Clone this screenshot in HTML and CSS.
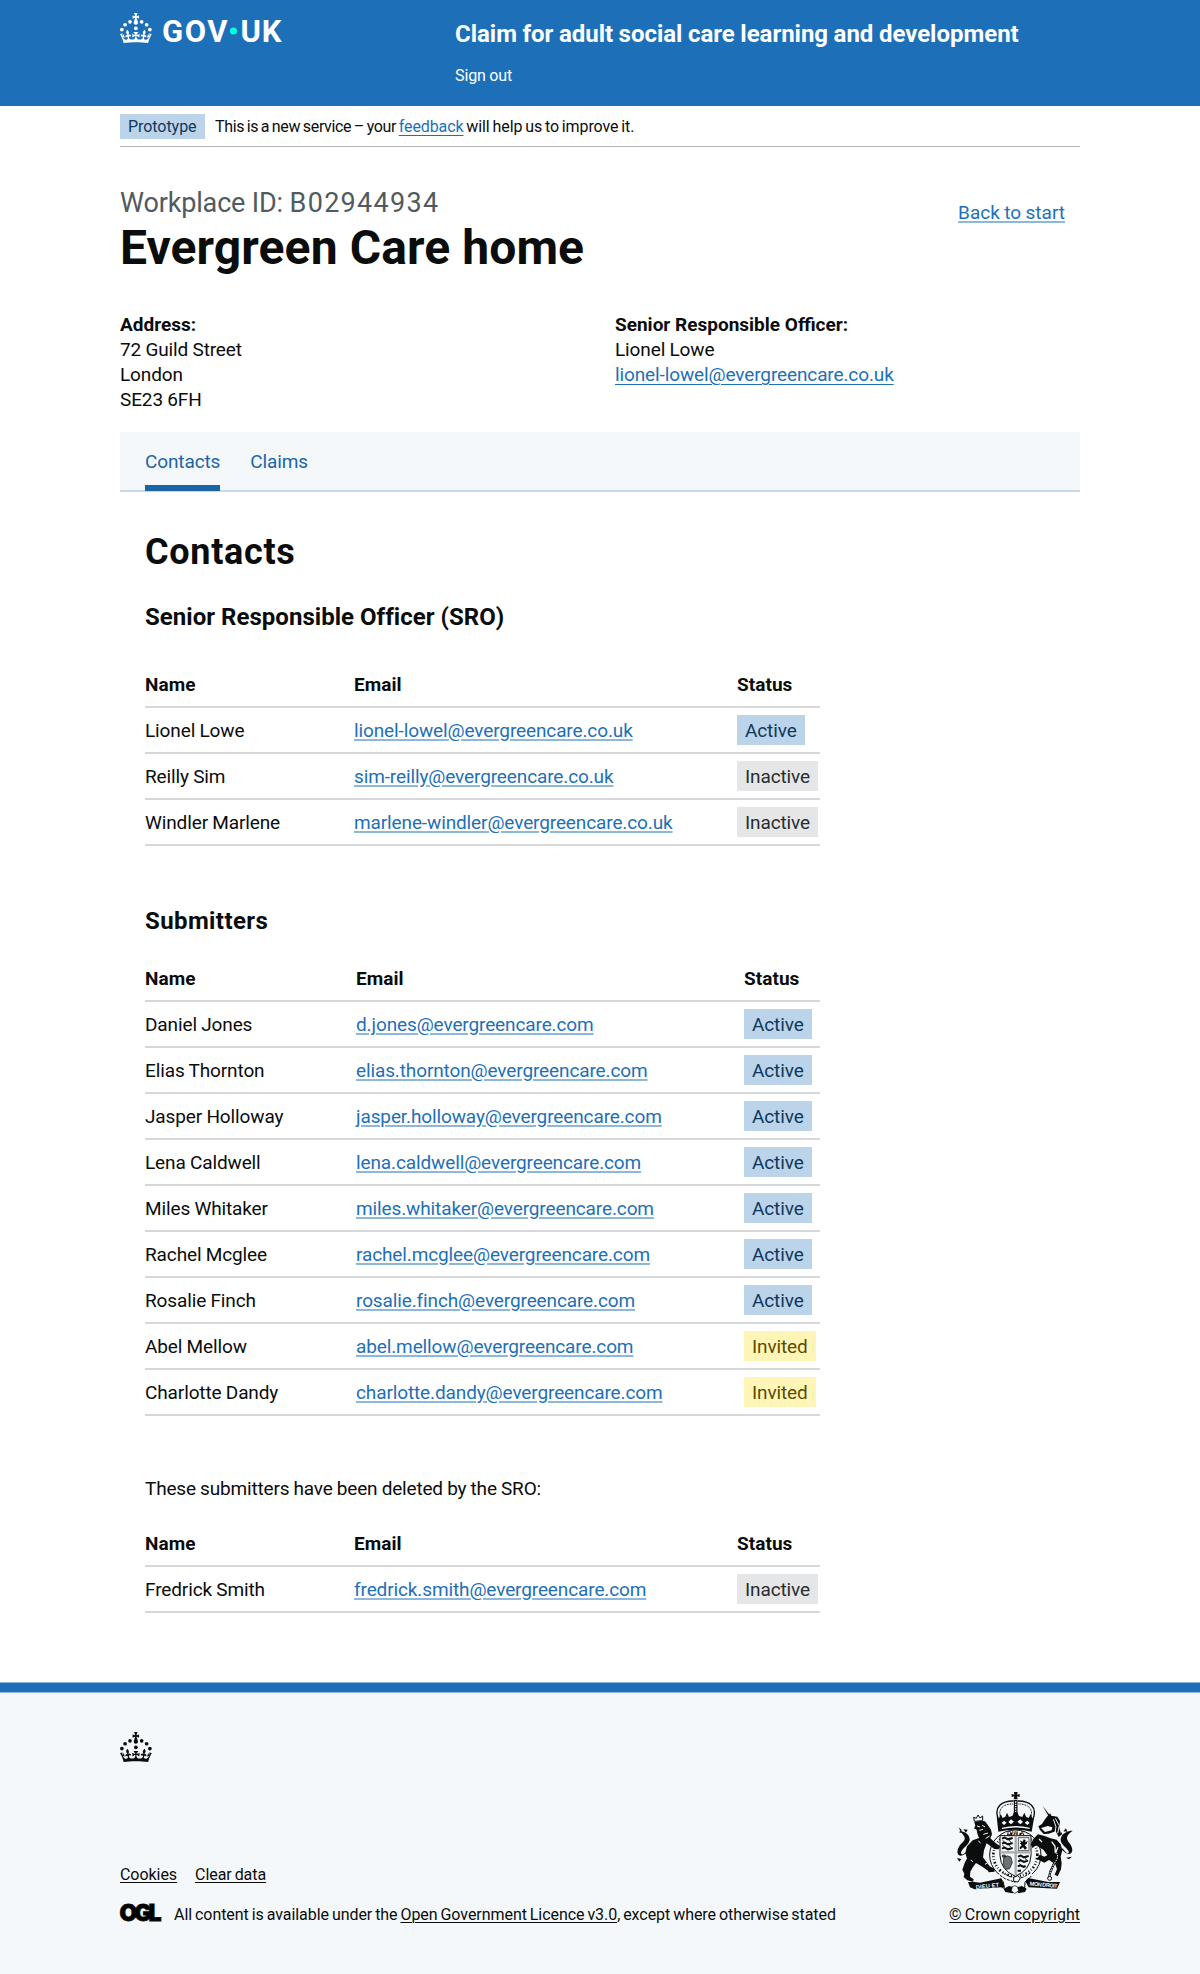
FILE: index.html
```html
<!DOCTYPE html>
<html lang="en">
<head>
<meta charset="utf-8">
<title>Evergreen Care home - Claim for adult social care learning and development</title>
<link rel="stylesheet" href="styles.css">
</head>
<body>
<svg class="defs" width="0" height="0" aria-hidden="true">
  <defs>
    <g id="crown">
      <circle cx="20" cy="17.6" r="3.7"/><circle cx="10.2" cy="23.5" r="3.7"/><circle cx="3.7" cy="33.2" r="3.7"/>
      <circle cx="31.7" cy="30.6" r="3.7"/><circle cx="43.3" cy="17.6" r="3.7"/><circle cx="53.2" cy="23.5" r="3.7"/><circle cx="59.7" cy="33.2" r="3.7"/>
      <path d="M33.1,9.8c.2-.1.3-.3.5-.5l4.6,2.4v-6.8l-4.6,1.5c-.1-.2-.3-.3-.5-.5l1.9-5.9h-6.7l1.9,5.9c-.2.1-.3.3-.5.5l-4.6-1.5v6.8l4.6-2.4c.1.2.3.3.5.5l-2.6,8c-.9,2.8,1.2,5.7,4.1,5.7h0c3,0,5.1-2.9,4.1-5.7l-2.6-8ZM37,37.9s-3.4,3.8-4.1,6.1c2.2,0,4.2-.5,6.4-2.8l-.7,8.5c-2-2.8-4.4-4.1-5.7-3.8.1,3.1.5,6.7,5.8,7.2,3.7.3,6.7-1.5,7-3.8.4-2.6-2-4.3-3.7-1.6-1.4-4.5,2.4-6.1,4.9-3.2-1.9-4.5-1.8-7.7,2.4-10.9,3,4,2.6,7.3-1.2,11.1,2.4-1.3,6.2,0,4,4.6-1.2-2.8-3.7-2.2-4.2.2-.3,1.7.7,3.7,3,4.2,1.9.3,4.7-.9,7-5.9-1.3,0-2.4.7-3.9,1.7l2.4-8c.6,2.3,1.4,3.7,2.2,4.5.6-1.6.5-2.8,0-5.3l5,1.8c-2.6,3.6-5.2,8.7-7.3,17.5-7.4-1.1-15.7-1.7-24.5-1.7h0c-8.8,0-17.1.6-24.5,1.7-2.1-8.9-4.7-13.9-7.3-17.5l5-1.8c-.5,2.5-.6,3.7,0,5.3.8-.8,1.6-2.3,2.2-4.5l2.4,8c-1.5-1-2.6-1.7-3.9-1.7,2.3,5,5.2,6.2,7,5.9,2.3-.4,3.3-2.4,3-4.2-.5-2.4-3-3.1-4.2-.2-2.2-4.6,1.6-6,4-4.6-3.7-3.7-4.2-7.1-1.2-11.1,4.2,3.2,4.3,6.4,2.4,10.9,2.5-2.8,6.3-1.3,4.9,3.2-1.8-2.7-4.1-1-3.7,1.6.3,2.3,3.3,4.1,7,3.8,5.4-.5,5.7-4.2,5.8-7.2-1.3-.2-3.7,1-5.7,3.8l-.7-8.5c2.2,2.3,4.2,2.7,6.4,2.8-.7-2.3-4.1-6.1-4.1-6.1h10.6,0Z"/>
    </g>
  </defs>
</svg>

<header class="header">
  <div class="container header__inner">
    <svg class="header__logo" width="164" height="32" viewBox="0 0 328 64" fill="currentColor" role="img" aria-label="GOV.UK">
      <use href="#crown"/>
      <text class="wordmark" x="84" y="58" textLength="131">GOV</text>
      <circle class="wordmark__dot" cx="227" cy="36" r="7.2"/>
      <text class="wordmark" x="241" y="58" textLength="82">UK</text>
    </svg>
    <div class="header__content">
      <div class="header__title">Claim for adult social care learning and development</div>
      <a class="header__link" href="#">Sign out</a>
    </div>
  </div>
</header>

<div class="container">
  <div class="banner">
    <strong class="tag tag--small">Prototype</strong>
    <span class="banner__text"><span class="banner__intro">This is a new service – your </span><a class="link" href="#">feedback</a> will help us to improve it.</span>
  </div>

  <main class="main">
    <div class="heading">
      <div>
        <div class="caption">Workplace ID: <span class="caption__id">B02944934</span></div>
        <h1 class="title">Evergreen Care home</h1>
      </div>
      <a class="link link--soft heading__back" href="#">Back to start</a>
    </div>

    <div class="details">
      <div><strong>Address:</strong><br>72 Guild Street<br>London<br>SE23 6FH</div>
      <div><strong>Senior Responsible Officer:</strong><br>Lionel Lowe<br><a class="link" href="#">lionel-lowel@evergreencare.co.uk</a></div>
    </div>

    <nav class="subnav">
      <a class="subnav__link subnav__link--current" href="#">Contacts</a>
      <a class="subnav__link" href="#">Claims</a>
    </nav>

    <section class="contacts">
      <h2 class="contacts__title">Contacts</h2>

      <h3 class="contacts__heading">Senior Responsible Officer (SRO)</h3>
      <table class="table table--sro">
        <thead><tr><th class="col-name">Name</th><th class="col-email">Email</th><th>Status</th></tr></thead>
        <tbody>
          <tr><td>Lionel Lowe</td><td><a class="link link--soft" href="#">lionel-lowel@evergreencare.co.uk</a></td><td><span class="tag">Active</span></td></tr>
          <tr><td>Reilly Sim</td><td><a class="link link--soft" href="#">sim-reilly@evergreencare.co.uk</a></td><td><span class="tag tag--grey">Inactive</span></td></tr>
          <tr><td>Windler Marlene</td><td><a class="link link--soft" href="#">marlene-windler@evergreencare.co.uk</a></td><td><span class="tag tag--grey">Inactive</span></td></tr>
        </tbody>
      </table>

      <h3 class="contacts__heading contacts__heading--submitters">Submitters</h3>
      <table class="table table--submitters">
        <thead><tr><th class="col-name">Name</th><th class="col-email">Email</th><th>Status</th></tr></thead>
        <tbody>
          <tr><td>Daniel Jones</td><td><a class="link link--soft" href="#">d.jones@evergreencare.com</a></td><td><span class="tag">Active</span></td></tr>
          <tr><td>Elias Thornton</td><td><a class="link link--soft" href="#">elias.thornton@evergreencare.com</a></td><td><span class="tag">Active</span></td></tr>
          <tr><td>Jasper Holloway</td><td><a class="link link--soft" href="#">jasper.holloway@evergreencare.com</a></td><td><span class="tag">Active</span></td></tr>
          <tr><td>Lena Caldwell</td><td><a class="link link--soft" href="#">lena.caldwell@evergreencare.com</a></td><td><span class="tag">Active</span></td></tr>
          <tr><td>Miles Whitaker</td><td><a class="link link--soft" href="#">miles.whitaker@evergreencare.com</a></td><td><span class="tag">Active</span></td></tr>
          <tr><td>Rachel Mcglee</td><td><a class="link link--soft" href="#">rachel.mcglee@evergreencare.com</a></td><td><span class="tag">Active</span></td></tr>
          <tr><td>Rosalie Finch</td><td><a class="link link--soft" href="#">rosalie.finch@evergreencare.com</a></td><td><span class="tag">Active</span></td></tr>
          <tr><td>Abel Mellow</td><td><a class="link link--soft" href="#">abel.mellow@evergreencare.com</a></td><td><span class="tag tag--yellow">Invited</span></td></tr>
          <tr><td>Charlotte Dandy</td><td><a class="link link--soft" href="#">charlotte.dandy@evergreencare.com</a></td><td><span class="tag tag--yellow">Invited</span></td></tr>
        </tbody>
      </table>

      <p class="contacts__note">These submitters have been deleted by the SRO:</p>
      <table class="table table--deleted">
        <thead><tr><th class="col-name">Name</th><th class="col-email">Email</th><th>Status</th></tr></thead>
        <tbody>
          <tr><td>Fredrick Smith</td><td><a class="link link--soft" href="#">fredrick.smith@evergreencare.com</a></td><td><span class="tag tag--grey">Inactive</span></td></tr>
        </tbody>
      </table>
    </section>
  </main>
</div>

<footer class="footer">
  <div class="footer__bar"></div>
  <div class="container footer__inner">
    <svg class="footer__crown" width="32" height="30" viewBox="0 0 64 60" fill="currentColor" aria-hidden="true"><use href="#crown"/></svg>
    <div class="footer__meta">
      <div class="footer__left">
        <div class="footer__links"><a href="#">Cookies</a><a href="#">Clear data</a></div>
        <div class="footer__licence">
          <svg class="ogl" width="42" height="18" viewBox="0 0 42 18" role="img" aria-label="Open Government Licence"><text class="ogl__text" x="-.5" y="17" textLength="42">OGL</text></svg>
          <span class="footer__text">All content is available under the <a href="#">Open Government Licence v3.0</a>, except where otherwise stated</span>
        </div>
      </div>
      <div class="footer__right">
        <svg class="arms" width="118" height="105" viewBox="108 60 354 315" aria-hidden="true">
          <!-- crown -->
          <path d="M282 66h11l-2 8 8-2v9l-8-2 2 9h-12l2-9-8 2v-9l8 2z"/>
          <g fill="none" stroke="#0b0c0c">
            <path d="M234 143C222 112 245 92 281 93M340 143C352 112 329 92 293 93" stroke-width="4"/>
            <path d="M241 139C234 116 251 101 279 102M333 139C340 116 323 101 295 102" stroke-width="3" stroke-dasharray="3 2"/>
            <path d="M287 90v48" stroke-width="11"/><path d="M287 94v42" stroke="#f4f8fb" stroke-width="4" stroke-dasharray="4 3"/>
          </g>
          <path d="M230 139l7 6 5-13 6 12 8-4 5-12 6 13 10-3 5-11 5-2 5 2 5 11 10 3 6-13 5 12 8 4 6-12 5 13 6-6-8 46q-48-12-100 0z"/>
          <g fill="#f4f8fb"><path d="M245 159l7-7 8 6-8 7zM265 156l8-8 9 7-9 8zM292 155l9-7 8 8-8 7zM314 158l8-6 7 7-7 6z"/><path d="M246 173q42-10 83 0v4q-41-9-83 0z"/></g>
          <!-- garter and shield -->
          <ellipse cx="286" cy="255" rx="77" ry="75" fill="#f4f8fb" stroke="#0b0c0c" stroke-width="3"/>
          <ellipse cx="286" cy="255" rx="66" ry="64" fill="none" stroke="#0b0c0c" stroke-width="8" stroke-dasharray="3 6 5 6 2 6"/>
          <path d="M240 197h93v60q-2 43-47 62-44-19-46-62z" fill="#f4f8fb" stroke="#0b0c0c" stroke-width="3"/>
          <g stroke="#0b0c0c" stroke-width="6" fill="none">
            <path d="M246 206l8-3 10 5 14-4M246 221l8-3 10 5 14-4M246 236l8-3 10 5 14-4"/>
            <path d="M294 260l8-3 10 5 14-4M294 274l8-3 10 5 12-4M293 289l8-3 10 5 6-3M293 302l10 0"/>
            <path d="M248 212l5 3M267 211l5 4M248 227l5 3M267 226l5 4M298 266l5 3M315 266l5 3M298 281l4 3" stroke-width="3"/>
          </g>
          <path d="M295 203h32v39h-32z" fill="none" stroke="#0b0c0c" stroke-width="2"/>
          <path d="M300 211l8 4 3-7 6 2-2 7 8-4-3 9-6 3 7 9-6 5-6-7-8 6-3-4 7-9-6-5 4-2z"/>
          <path d="M251 262q12-9 22 0l4 16-8 18-10 2-9-14zM247 255h9v6h-9z" fill="#6d7173" stroke="#0b0c0c" stroke-width="2"/>
          <path d="M287 197v120M240 247h93" stroke="#a9acaf" stroke-width="7"/>
          <text class="arms__garter" x="262" y="195" textLength="50">QUI A</text>
          <!-- lion -->
          <g>
            <path d="M163 154l-2-12 8 3 5-10 6 9 8-6v14z" fill="#f4f8fb" stroke="#0b0c0c" stroke-width="3"/>
            <path d="M163 157l18-5 14 2 8 10 10 15 3 14-5 12 19 17 11 7-5 9-13-1-23-17-8 21-3 21 11 15 9 12 14 7 1 9-18 2-2-5-17-12-19-11-9 12-8 14-1 15 11 8-2 7-17-4-11-10 2-10-6-12 8-23 6-10-5-18 5-19 17-18 19-7-5-13-2-12-8-4 4-8z"/>
            <path d="M139 250c-32 22-35-14-10-34 12-12 1-23-11-34 11 2 28 6 31 24 3 17-28 31-26 44 3 7 10 1 17-5z"/>
            <path d="M116 172l10 9-9 6 7 2zM130 178l13 1-5 9zM111 264l13 3-6 8z"/>
            <path d="M171 168l9 3M187 166l8 5M178 181l11-3M190 193l14-4M197 205l12-7M175 212l7 8M152 270l7 5M195 283l8-5" stroke="#f4f8fb" stroke-width="3"/>
          </g>
          <!-- unicorn -->
          <g>
            <path d="M385 137l-17-29 21 27z"/>
            <path d="M382 139l8-9 4 7 18 3 8 13-2 21 6 20-8 7-9-17-21 7-15 1-11-12-5-11 11-7 8-13z"/>
            <path d="M363 174l20-6 14 4-2 9-20 5z" fill="#f4f8fb"/>
            <path d="M406 145l12 22-5 23M400 148l8 22-3 19" stroke="#f4f8fb" stroke-width="3" fill="none"/>
            <path d="M340 207l14-14 20 5 18 7 18 4 12 14 5 17-5 20 3 20-2 18-10 21-9-5 7-17-5-14-19-13-14 8-23-11 9-13 14 6 9-4-12-17-24-14-8 10-6-12z"/>
            <path d="M357 207l9 9M395 215l10 14 1 20M414 232l-8 18" stroke="#f4f8fb" stroke-width="4" fill="none"/>
            <path d="M425 238c20 26 44 12 25-17-13-15-13-24 8-39-15 0-32 7-36 24-3 20 30 32 24 43-6 4-12-6-18-14z"/>
            <path d="M438 175l4 10-12-1zM424 186l3 9-6-2zM438 263l18-3-9 8z"/>
            <path d="M409 247c9 15 0 24-8 36l-10 23-5 20" fill="none" stroke="#0b0c0c" stroke-width="7"/><path d="M409 247c9 15 0 24-8 36l-10 23-5 20" fill="none" stroke="#f4f8fb" stroke-width="3" stroke-dasharray="5 3"/>
            <circle cx="389" cy="325" r="6" fill="#f4f8fb" stroke="#0b0c0c" stroke-width="3"/>
          </g>
          <!-- compartment and motto -->
          <path d="M241 307q43 32 93 0l8 17-22 17 6 20-37 11-39-3-7-23 3-14-12-10z" fill="#f4f8fb"/>
          <path d="M246 307l21 12 22 5 20-2 22-13M240 316l17 11 29 10M334 318l-16 19" stroke="#0b0c0c" stroke-width="3" fill="none" stroke-dasharray="9 3"/>
          <path d="M281 322l12-5 8 7-7 12-13-2z" fill="#f4f8fb" stroke="#0b0c0c" stroke-width="3"/>
          <path d="M251 356l16-8 14 3 4 10-7 9-22-4zM320 356l-14-8-13 3-4 10 6 9 20-4z"/>
          <path d="M277 350q8-6 15 0l4 13-12 7-10-7z" fill="#f4f8fb" stroke="#0b0c0c" stroke-width="2"/>
          <path d="M144 336l14-1 22 3 64-13 10 26-90 7-14-6zM324 324l61 12 35 0-9 20-85-4-9-17z"/>
          <path d="M242 326l8 10 3 19-8-3M324 326l-9 11-1 18" fill="none" stroke="#0b0c0c" stroke-width="3"/>
          <text class="arms__motto" x="167" y="354" textLength="70" transform="rotate(-6 200 345)">DIEU ET</text>
          <text class="arms__motto" x="329" y="350" textLength="84" transform="rotate(5 370 345)">MON DROIT</text>
        </svg>
        <a class="footer__copyright" href="#">© Crown copyright</a>
      </div>
    </div>
  </div>
</footer>
</body>
</html>
```
FILE: styles.css
```css
* { box-sizing: border-box; }

body {
  margin: 0;
  background: #fff;
  color: #0b0c0c;
  font: 400 19px/25px Roboto, "Liberation Sans", sans-serif;
  letter-spacing: -0.12px;
  word-spacing: -0.3px;
}

h1, h2, h3, p { margin: 0; }

.defs { display: block; }
svg { overflow: visible; }

.container { width: 960px; margin: 0 auto; }

.link {
  color: #1d70b8;
  text-decoration: underline;
  text-decoration-thickness: 1px;
  text-underline-offset: 3px;
}

.link--soft {
  text-decoration-color: #8db7db;
  text-decoration-thickness: 2px;
  text-underline-offset: 2px;
}

/* Header */
.header { height: 106px; background: #1d70b8; color: #fff; }
.header__inner { display: flex; }
.header__logo { margin-top: 13px; flex: none; }
.wordmark { font: 700 62px Roboto, sans-serif; letter-spacing: 0; }
.wordmark__dot { fill: #00ffe0; }
.header__content { margin-left: 171px; padding-top: 19px; }
.header__title {
  font-size: 24px;
  line-height: 30px;
  font-weight: 700;
  letter-spacing: -0.02px;
  word-spacing: -0.4px;
}
.header__link {
  display: block;
  margin-top: 17px;
  color: inherit;
  font-size: 16px;
  line-height: 20px;
  text-decoration: none;
}

/* Phase banner */
.banner {
  display: flex;
  height: 41px;
  padding-top: 8px;
  border-bottom: 1px solid #b1b4b6;
}
.banner__text {
  margin-left: 10px;
  font-size: 16px;
  letter-spacing: -0.1px;
  word-spacing: -1px;
}
.banner__intro { letter-spacing: -0.34px; }

/* Tags */
.tag {
  display: inline-block;
  height: 30px;
  padding: 0 8px;
  background: #bbd4ea;
  color: #0f385c;
  line-height: 32px;
  font-weight: 400;
  vertical-align: top;
}
.tag--small { width: 85px; height: 25px; font-size: 16px; line-height: 25px; letter-spacing: -0.05px; }
.tag--grey { background: #e5e6e7; color: #282d30; }
.tag--yellow { background: #fff5b7; color: #594d00; }

/* Workplace heading */
.main { padding-top: 41px; }
.heading { display: flex; justify-content: space-between; padding-right: 15px; }
.heading__back { margin-top: 12px; letter-spacing: 0; }
.caption {
  color: #505a5f;
  font-size: 27px;
  line-height: 30px;
  letter-spacing: -0.15px;
  word-spacing: 0;
}
.caption__id { letter-spacing: 1.3px; }
.title {
  margin-top: 5px;
  font-size: 48px;
  line-height: 50px;
  letter-spacing: 0.1px;
  word-spacing: 0;
}
.details {
  display: grid;
  grid-template-columns: 495px 1fr;
  margin-top: 39px;
}
.details strong { letter-spacing: 0; word-spacing: 0; }

/* Secondary navigation */
.subnav {
  display: flex;
  gap: 30px;
  height: 60px;
  margin-top: 20px;
  padding: 17px 25px 0;
  background: #f4f8fb;
  border-bottom: 2px solid #c3d9eb;
}
.subnav__link {
  height: 42px;
  color: #1a65a6;
  text-decoration: none;
}
.subnav__link--current { border-bottom: 6px solid #1a65a6; }

/* Contacts */
.contacts { width: 700px; padding: 40px 0 69px 25px; }
.contacts__title { font-size: 36px; line-height: 40px; letter-spacing: 0.7px; }
.contacts__heading {
  margin: 30px 0;
  font-size: 24px;
  line-height: 30px;
  letter-spacing: 0.03px;
  word-spacing: 0;
}
.contacts__heading--submitters { margin: 60px 0 20px; letter-spacing: 0.4px; }
.contacts__note { margin: 60px 0 20px; letter-spacing: -0.18px; }

.table {
  width: 675px;
  table-layout: fixed;
  border-collapse: separate;
  border-spacing: 0;
}
.table th, .table td {
  height: 46px;
  padding: 10px 0 9px;
  border-bottom: 2px solid #d8d8da;
  text-align: left;
  vertical-align: top;
}
.table th { letter-spacing: 0.05px; }
.table td:last-child { padding: 7px 0; }
.col-name { width: 209px; }
.col-email { width: 383px; }
.table--submitters .col-name { width: 211px; }
.table--submitters .col-email { width: 388px; }

/* Footer */
.footer {
  background: #f4f8fb;
  font-size: 16px;
  line-height: 20px;
  letter-spacing: -0.05px;
  word-spacing: -1px;
}
.footer a {
  color: inherit;
  text-decoration: underline;
  text-decoration-thickness: 1px;
  text-underline-offset: 2px;
}
.footer__bar {
  height: 11px;
  background: #1d70b8;
  border: solid #8db7db;
  border-width: 1px 0;
}
.footer__inner { padding: 39px 0 49px; }
.footer__crown { display: block; }
.footer__meta {
  display: flex;
  justify-content: space-between;
  align-items: flex-end;
  margin-top: 28px;
}
.footer__links { display: flex; gap: 18px; }
.footer__licence { display: flex; margin-top: 19px; }
.footer__text { padding-top: 1px; }
.ogl { margin-right: 12px; }
.ogl__text {
  font: 900 23px Inter, Roboto, sans-serif;
  letter-spacing: 0;
  stroke: #0b0c0c;
  stroke-width: 0.8;
}
.footer__right { display: flex; flex-direction: column; align-items: center; }
.footer__copyright { letter-spacing: 0; word-spacing: -0.8px; }
.arms { margin-bottom: 10px; fill: #0b0c0c; }
.arms__garter { font: 700 16px "Liberation Sans", sans-serif; letter-spacing: 0; word-spacing: 0; }
.arms__motto {
  font: 700 17px "Liberation Sans", sans-serif;
  fill: #f4f8fb;
  letter-spacing: 0;
  word-spacing: 0;
}
```
